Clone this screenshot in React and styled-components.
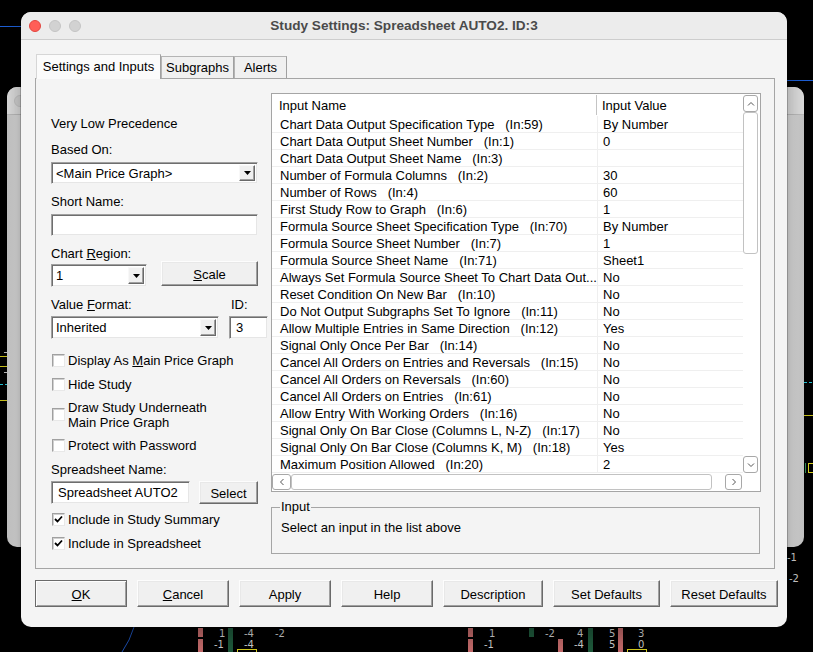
import styled, { createGlobalStyle } from "styled-components";

const GlobalStyle = createGlobalStyle`
  html, body {
    margin: 0;
    padding: 0;
    background: #000;
  }
  body {
    font-family: "Liberation Sans", Arial, sans-serif;
    font-size: 13px;
    color: #000;
  }
  * {
    box-sizing: border-box;
  }
`;

const Desktop = styled.div`
  position: relative;
  width: 813px;
  height: 652px;
  overflow: hidden;
  background: #000;
`;

const ChartLayer = styled.svg`
  position: absolute;
  left: 0;
  top: 0;
`;

const BackWindow = styled.div`
  position: absolute;
  left: 7px;
  top: 87px;
  width: 797px;
  height: 460px;
  border-radius: 10px;
  overflow: hidden;
  background: linear-gradient(90deg, #c6c6c6 0px, #dadada 9px, #dadada 785px, #c6c6c6 100%);
`;

const BackTitle = styled.div`
  height: 28px;
  display: flex;
  align-items: center;
  padding-left: 7px;
  background: #dedede;
  border-bottom: 1px solid #bcbcbc;
`;

const Dialog = styled.div`
  position: absolute;
  left: 21px;
  top: 12px;
  width: 766px;
  height: 615px;
  background: #f4f4f4;
  border-radius: 10px;
  overflow: hidden;
  display: flex;
  flex-direction: column;
  box-shadow: 0 0 0 1px rgba(0, 0, 0, 0.2), 0 8px 24px rgba(0, 0, 0, 0.35);
`;

const TitleBar = styled.div`
  height: 28px;
  flex: none;
  display: grid;
  grid-template-columns: 1fr auto 1fr;
  align-items: center;
  padding: 0 8px;
  background: #ececec;
  border-bottom: 1px solid #cdcdcd;
`;

const Lights = styled.div`
  display: flex;
  gap: 8px;
`;

const Light = styled.span`
  width: 12px;
  height: 12px;
  border-radius: 50%;
  background: ${(p) => (p.$red ? "#ff5f57" : "#d2d2d2")};
  border: 1px solid ${(p) => (p.$red ? "#e2463f" : "#c4c4c4")};
`;

const Title = styled.div`
  font-family: "Liberation Sans", Arial, sans-serif;
  font-weight: bold;
  font-size: 13.6px;
  color: #4a4a4a;
`;

const Body = styled.div`
  flex: 1;
  padding: 14px 8px 0 14px;
  display: flex;
  flex-direction: column;
`;

const TabStrip = styled.div`
  display: flex;
  align-items: flex-end;
  height: 24px;
  padding-left: 1px;
  position: relative;
  z-index: 1;
`;

const Tab = styled.div`
  width: ${(p) => p.$w}px;
  height: ${(p) => (p.$active ? 25 : 22)}px;
  margin-bottom: ${(p) => (p.$active ? -1 : 0)}px;
  display: flex;
  align-items: center;
  justify-content: center;
  padding-bottom: ${(p) => (p.$active ? 2 : 0)}px;
  background: ${(p) => (p.$active ? "#fbfbfb" : "#f0f0f0")};
  border: 1px solid #a9a9a9;
  border-color: ${(p) => (p.$active ? "#d6d6d6 #a0a0a0 transparent #d6d6d6" : "#b4b4b4 #a0a0a0 transparent #b4b4b4")};
  border-bottom: none;
  white-space: nowrap;
`;

const Panel = styled.div`
  width: 740px;
  height: 491px;
  display: flex;
  padding-left: 15px;
  border: 1px solid #a5a5a5;
  background: #f4f4f4;
`;

const LeftCol = styled.div`
  width: 220px;
  display: flex;
  flex-direction: column;
`;

const Label = styled.div`
  margin-top: ${(p) => p.$mt || 0}px;
  height: 16px;
  padding-top: 1px;
  line-height: 16px;
  white-space: nowrap;
`;

const LabelRow = styled.div`
  margin-top: ${(p) => p.$mt || 0}px;
  display: grid;
  grid-template-columns: 180px 1fr;
  height: 16px;
  padding-top: 1px;
  line-height: 16px;
`;

const FieldRow = styled.div`
  margin-top: ${(p) => p.$mt || 0}px;
  display: flex;
  align-items: flex-start;
  gap: ${(p) => p.$gap || 0}px;
`;

const sunken = `
  background: #fff;
  border: 1px solid;
  border-color: #a0a0a0 #f4f4f4 #f4f4f4 #a0a0a0;
  box-shadow: inset 1px 1px 0 #6e6e6e, inset -1px -1px 0 #e6e6e6;
`;

const Combo = styled.div`
  ${sunken}
  width: ${(p) => p.$w}px;
  height: ${(p) => p.$h || 22}px;
  margin-top: ${(p) => p.$mt || 0}px;
  display: flex;
  align-items: center;
  justify-content: space-between;
  padding: 2px 2px 2px 4px;
  white-space: nowrap;
`;

const DropBtn = styled.span`
  width: 16px;
  height: 100%;
  display: flex;
  align-items: center;
  justify-content: center;
  background: #f0f0f0;
  border: 1px solid;
  border-color: #f8f8f8 #696969 #696969 #f8f8f8;
  box-shadow: inset -1px -1px 0 #a0a0a0;
`;

const TextBox = styled.div`
  ${sunken}
  width: ${(p) => p.$w}px;
  height: ${(p) => p.$h || 22}px;
  margin-top: ${(p) => p.$mt || 0}px;
  display: flex;
  align-items: center;
  padding-left: ${(p) => p.$pad || 5}px;
  white-space: nowrap;
`;

const Button = styled.button`
  width: ${(p) => p.$w}px;
  height: ${(p) => p.$h || 27}px;
  margin: 0;
  padding: 1px 0 0;
  font-family: "Liberation Sans", Arial, sans-serif;
  font-size: 13px;
  color: #000;
  background: #f0f0f0;
  border: 1px solid;
  border-color: ${(p) => (p.$default ? "#6a6a6a" : "#fdfdfd #6a6a6a #6a6a6a #fdfdfd")};
  box-shadow: ${(p) =>
    p.$default
      ? "inset 1px 1px 0 #fdfdfd, inset -1px -1px 0 #a0a0a0"
      : "inset -1px -1px 0 #a0a0a0, inset 1px 1px 0 #e8e8e8"};
  white-space: nowrap;
`;

const CheckRow = styled.div`
  margin-top: ${(p) => p.$mt || 0}px;
  display: flex;
  align-items: center;
  gap: 3px;
  padding-left: 1px;
  line-height: 15px;
  min-height: 16px;
`;

const CheckText = styled.span`
  padding-top: 1px;
`;

const CheckBox = styled.span`
  width: 13px;
  height: 13px;
  flex: none;
  display: flex;
  align-items: center;
  justify-content: center;
  background: #fff;
  border: 1px solid;
  border-color: #a0a0a0 #e8e8e8 #e8e8e8 #a0a0a0;
  box-shadow: inset 1px 1px 0 #d0d0d0;
`;

const RightCol = styled.div`
  width: 490px;
  padding-top: 14px;
  display: flex;
  flex-direction: column;
`;

const TableFrame = styled.div`
  width: 490px;
  height: 399px;
  border: 1px solid #a5a5a5;
  background: #fff;
  display: grid;
  grid-template-columns: 471px 17px;
  grid-template-rows: 379px 18px;
`;

const Grid = styled.div`
  display: flex;
  flex-direction: column;
`;

const HeaderRow = styled.div`
  height: 22px;
  display: grid;
  grid-template-columns: 324px 147px;
  align-items: center;
`;

const HeaderCell = styled.div`
  height: 20px;
  line-height: 20px;
  padding-top: 1px;
  padding-left: ${(p) => (p.$divider ? 5 : 7)}px;
  border-left: ${(p) => (p.$divider ? "1px solid #c4c4c4" : "none")};
`;

const DataRow = styled.div`
  height: 17px;
  display: grid;
  grid-template-columns: 325px 146px;
  border-bottom: 1px solid #efefef;
`;

const Cell = styled.div`
  line-height: 16px;
  padding-top: 1px;
  padding-left: ${(p) => (p.$value ? 5 : 8)}px;
  border-left: ${(p) => (p.$value ? "1px solid #efefef" : "none")};
  white-space: pre;
`;

const VScroll = styled.div`
  display: flex;
  flex-direction: column;
  padding: 1px 2px 0 0;
`;

const HScroll = styled.div`
  display: flex;
  align-items: center;
  padding: 0 1px 1px 0;
`;

const ArrowBox = styled.span`
  width: ${(p) => p.$w}px;
  height: ${(p) => p.$h}px;
  flex: none;
  margin-top: ${(p) => (p.$end ? "auto" : "0")};
  margin-left: ${(p) => (p.$push ? "auto" : "0")};
  display: flex;
  align-items: center;
  justify-content: center;
  background: #fff;
  border: 1px solid #a8a8a8;
  border-radius: 3px;
`;

const Thumb = styled.span`
  flex: none;
  width: ${(p) => p.$w}px;
  height: ${(p) => p.$h}px;
  border: 1px solid #c2c2c2;
  border-radius: 3px;
  background: #fff;
`;

const Corner = styled.div`
  background: #fff;
`;

const GroupBox = styled.fieldset`
  margin: 7px 0 0 0;
  width: 489px;
  padding: 0 9px 17px 9px;
  border: 1px solid #a5a5a5;
  min-width: 0;
`;

const Legend = styled.legend`
  padding: 0 1px;
  margin-left: -1px;
  line-height: 16px;
`;

const GroupText = styled.div`
  margin-top: 4px;
  padding-top: 1px;
  line-height: 16px;
`;

const ButtonRow = styled.div`
  margin-top: 11px;
  display: flex;
  gap: 10px;
`;

const rows = [
  ["Chart Data Output Specification Type   (In:59)", "By Number"],
  ["Chart Data Output Sheet Number   (In:1)", "0"],
  ["Chart Data Output Sheet Name   (In:3)", ""],
  ["Number of Formula Columns   (In:2)", "30"],
  ["Number of Rows   (In:4)", "60"],
  ["First Study Row to Graph   (In:6)", "1"],
  ["Formula Source Sheet Specification Type   (In:70)", "By Number"],
  ["Formula Source Sheet Number   (In:7)", "1"],
  ["Formula Source Sheet Name   (In:71)", "Sheet1"],
  ["Always Set Formula Source Sheet To Chart Data Out...", "No"],
  ["Reset Condition On New Bar   (In:10)", "No"],
  ["Do Not Output Subgraphs Set To Ignore   (In:11)", "No"],
  ["Allow Multiple Entries in Same Direction   (In:12)", "Yes"],
  ["Signal Only Once Per Bar   (In:14)", "No"],
  ["Cancel All Orders on Entries and Reversals   (In:15)", "No"],
  ["Cancel All Orders on Reversals   (In:60)", "No"],
  ["Cancel All Orders on Entries   (In:61)", "No"],
  ["Allow Entry With Working Orders   (In:16)", "No"],
  ["Signal Only On Bar Close (Columns L, N-Z)   (In:17)", "No"],
  ["Signal Only On Bar Close (Columns K, M)   (In:18)", "Yes"],
  ["Maximum Position Allowed   (In:20)", "2"],
];

const footerButtons = [
  { w: 92, label: <><u>O</u>K</>, def: true },
  { w: 92, label: <><u>C</u>ancel</> },
  { w: 92, label: "Apply" },
  { w: 92, label: "Help" },
  { w: 100, label: "Description" },
  { w: 107, label: "Set Defaults" },
  { w: 108, label: "Reset Defaults" },
];

const DropArrow = () => (
  <svg width="7" height="4" viewBox="0 0 7 4">
    <polygon points="0,0 7,0 3.5,4" fill="#000" />
  </svg>
);

const Chevron = ({ dir }) => {
  const pts = {
    up: "1,4.5 4,1.5 7,4.5",
    down: "1,1.5 4,4.5 7,1.5",
    left: "4.5,1 1.5,4 4.5,7",
    right: "1.5,1 4.5,4 1.5,7",
  }[dir];
  const horiz = dir === "left" || dir === "right";
  return (
    <svg width={horiz ? 6 : 8} height={horiz ? 8 : 6} viewBox={horiz ? "0 0 6 8" : "0 0 8 6"}>
      <polyline points={pts} fill="none" stroke="#555" strokeWidth="1" />
    </svg>
  );
};

const Check = () => (
  <svg width="9" height="9" viewBox="0 0 9 9">
    <polyline points="1,4 3.5,6.5 8,1.5" fill="none" stroke="#000" strokeWidth="1.8" />
  </svg>
);

const txt = { fill: "#d0d0d0", fontSize: 10, fontFamily: "DejaVu Sans, sans-serif" };

const Chart = () => (
  <ChartLayer width="813" height="652" viewBox="0 0 813 652">
    <line x1="0" y1="26.5" x2="22" y2="26.5" stroke="#1d5fd6" />
    <line x1="786" y1="80.5" x2="813" y2="80.5" stroke="#1d5fd6" />
    <line x1="0" y1="356.5" x2="7" y2="356.5" stroke="#c8c01c" />
    <line x1="0" y1="366.5" x2="7" y2="366.5" stroke="#c8c01c" />
    <line x1="0" y1="384.5" x2="7" y2="384.5" stroke="#22c0d2" strokeDasharray="3 2" />
    <line x1="0" y1="400.5" x2="7" y2="400.5" stroke="#c8c01c" />
    <line x1="4" y1="352.5" x2="7" y2="352.5" stroke="#bbb" />
    <line x1="4" y1="372.5" x2="7" y2="372.5" stroke="#bbb" />
    <line x1="804" y1="382.5" x2="813" y2="382.5" stroke="#22c0d2" strokeDasharray="3 2" />
    <line x1="804" y1="415.5" x2="813" y2="415.5" stroke="#c8c01c" />
    <line x1="805.5" y1="463" x2="805.5" y2="473" stroke="#2e8a55" />
    <rect x="808.5" y="463.5" width="8" height="9" fill="none" stroke="#d8d020" />
    <text x="787" y="561" style={txt}>-1</text>
    <text x="789" y="582" style={txt}>-2</text>

    <path d="M134 627 L129 640 L122 652" fill="none" stroke="#1d4fb0" />
    <rect x="198" y="628" width="5" height="9" fill="#c46b6b" />
    <rect x="198" y="639" width="5" height="13" fill="#c46b6b" />
    <rect x="228" y="628" width="5" height="24" fill="#1f5a3c" />
    <rect x="237.5" y="649.5" width="19" height="6" fill="none" stroke="#d8d020" />
    <text x="219" y="637" style={txt}>1</text>
    <text x="244" y="637" style={txt}>-4</text>
    <text x="275" y="637" style={txt}>-2</text>
    <text x="214" y="648" style={txt}>-1</text>
    <text x="244" y="648" style={txt}>-4</text>

    <rect x="468" y="628" width="5" height="9" fill="#c46b6b" />
    <rect x="468" y="639" width="5" height="13" fill="#c46b6b" />
    <rect x="529" y="628" width="5" height="9" fill="#1f5a3c" />
    <rect x="558" y="639" width="5" height="13" fill="#c46b6b" />
    <rect x="588" y="628" width="5" height="24" fill="#1f5a3c" />
    <rect x="618" y="628" width="5" height="24" fill="#c46b6b" />
    <rect x="627.5" y="649.5" width="19" height="6" fill="none" stroke="#d8d020" />
    <text x="489" y="637" style={txt}>1</text>
    <text x="545" y="637" style={txt}>-2</text>
    <text x="577" y="637" style={txt}>4</text>
    <text x="609" y="637" style={txt}>5</text>
    <text x="638" y="637" style={txt}>3</text>
    <text x="484" y="648" style={txt}>-1</text>
    <text x="574" y="648" style={txt}>-4</text>
    <text x="609" y="648" style={txt}>5</text>
    <text x="638" y="648" style={txt}>0</text>
  </ChartLayer>
);

const App = () => {
  return (
    <Desktop>
      <GlobalStyle />
      <Chart />
      <BackWindow>
        <BackTitle>
          <Light />
        </BackTitle>
      </BackWindow>

      <Dialog>
        <TitleBar>
          <Lights>
            <Light $red />
            <Light />
            <Light />
          </Lights>
          <Title>Study Settings: Spreadsheet AUTO2. ID:3</Title>
          <span />
        </TitleBar>

        <Body>
          <TabStrip>
            <Tab $active $w={125}>Settings and Inputs</Tab>
            <Tab $w={73}>Subgraphs</Tab>
            <Tab $w={53}>Alerts</Tab>
          </TabStrip>

          <Panel>
            <LeftCol>
              <Label $mt={36}>Very Low Precedence</Label>
              <Label $mt={10}>Based On:</Label>
              <Combo $mt={5} $w={207}>
                <span>&lt;Main Price Graph&gt;</span>
                <DropBtn><DropArrow /></DropBtn>
              </Combo>
              <Label $mt={9}>Short Name:</Label>
              <TextBox $mt={5} $w={207} />
              <Label $mt={9}>Chart <u>R</u>egion:</Label>
              <FieldRow $gap={14}>
                <Combo $mt={3} $w={96} $h={23}>
                  <span>1</span>
                  <DropBtn><DropArrow /></DropBtn>
                </Combo>
                <Button $w={97} $h={25}><u>S</u>cale</Button>
              </FieldRow>
              <LabelRow $mt={9}>
                <span>Value <u>F</u>ormat:</span>
                <span>ID:</span>
              </LabelRow>
              <FieldRow $mt={4} $gap={10}>
                <Combo $w={168} $h={23}>
                  <span>Inherited</span>
                  <DropBtn><DropArrow /></DropBtn>
                </Combo>
                <TextBox $w={39} $h={23} $pad={6}>3</TextBox>
              </FieldRow>
              <CheckRow $mt={13}>
                <CheckBox />
                <CheckText>Display As <u>M</u>ain Price Graph</CheckText>
              </CheckRow>
              <CheckRow $mt={8}>
                <CheckBox />
                <CheckText>Hide Study</CheckText>
              </CheckRow>
              <CheckRow $mt={7}>
                <CheckBox />
                <CheckText>Draw Study Underneath<br />Main Price Graph</CheckText>
              </CheckRow>
              <CheckRow $mt={7}>
                <CheckBox />
                <CheckText>Protect with Password</CheckText>
              </CheckRow>
              <Label $mt={8}>Spreadsheet Name:</Label>
              <FieldRow $mt={4} $gap={9}>
                <TextBox $w={139} $h={23} $pad={6}>Spreadsheet AUTO2</TextBox>
                <Button $w={59} $h={23}>Select</Button>
              </FieldRow>
              <CheckRow $mt={7}>
                <CheckBox><Check /></CheckBox>
                <CheckText>Include in Study Summary</CheckText>
              </CheckRow>
              <CheckRow $mt={8}>
                <CheckBox><Check /></CheckBox>
                <CheckText>Include in Spreadsheet</CheckText>
              </CheckRow>
            </LeftCol>

            <RightCol>
              <TableFrame>
                <Grid>
                  <HeaderRow>
                    <HeaderCell>Input Name</HeaderCell>
                    <HeaderCell $divider>Input Value</HeaderCell>
                  </HeaderRow>
                  {rows.map(([name, value]) => (
                    <DataRow key={name}>
                      <Cell>{name}</Cell>
                      <Cell $value>{value}</Cell>
                    </DataRow>
                  ))}
                </Grid>
                <VScroll>
                  <ArrowBox $w={15} $h={17}><Chevron dir="up" /></ArrowBox>
                  <Thumb $w={15} $h={142} />
                  <ArrowBox $w={15} $h={17} $end><Chevron dir="down" /></ArrowBox>
                </VScroll>
                <HScroll>
                  <ArrowBox $w={19} $h={16}><Chevron dir="left" /></ArrowBox>
                  <Thumb $w={421} $h={16} />
                  <ArrowBox $w={17} $h={16} $push><Chevron dir="right" /></ArrowBox>
                </HScroll>
                <Corner />
              </TableFrame>

              <GroupBox>
                <Legend>Input</Legend>
                <GroupText>Select an input in the list above</GroupText>
              </GroupBox>
            </RightCol>
          </Panel>

          <ButtonRow>
            {footerButtons.map((b, i) => (
              <Button key={i} $w={b.w} $default={b.def}>{b.label}</Button>
            ))}
          </ButtonRow>
        </Body>
      </Dialog>
    </Desktop>
  );
};

export default App;
